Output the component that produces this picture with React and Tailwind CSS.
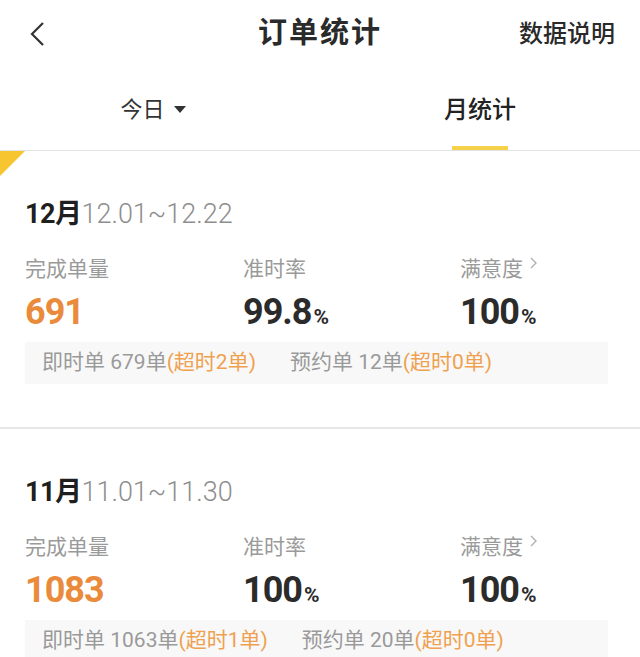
import React from "react";

const font = { fontFamily: '"Roboto", "Noto Sans CJK SC", sans-serif' };

function Stat({ label, value, unit, orange, arrow }) {
  return (
    <div className="flex flex-col">
      <div className="flex items-start h-[28px] text-[21px] leading-[28px] text-[#9a9a9a]">
        <span>{label}</span>
        {arrow && (
          <svg width="10" height="14" viewBox="0 0 10 14" className="ml-[6px] mt-[1px]">
            <polyline points="2,2 7,7 2,12" fill="none" stroke="#b0b0b0" strokeWidth="1.4" />
          </svg>
        )}
      </div>
      <div
        className={`mt-[9px] h-[40px] leading-[40px] font-bold text-[36px] tracking-[-1px] ${
          orange ? "text-[#ea8b3b]" : "text-[#2b2b2b]"
        }`}
      >
        {value}
        {unit && <span className="text-[21px] ml-[2px] tracking-normal">{unit}</span>}
      </div>
    </div>
  );
}

function Card({ month, range, total, ontime, sat, instant, instantOver, reserve, reserveOver, corner }) {
  return (
    <div className="relative bg-white pt-[47px] pb-[43px] border-b-[2px] border-[#e6e6e6]">
      {corner && (
        <div className="absolute left-0 top-0 w-0 h-0 border-t-[25px] border-t-[#f7c530] border-r-[25px] border-r-transparent" />
      )}
      <div className="pl-[25px] h-[32px] leading-[32px] text-[27px]">
        <span className="font-bold text-[#1f1f1f] tracking-[-0.5px]">{month}</span>
        <span className="text-[#8e8e8e] font-light">{range}</span>
      </div>
      <div className="pl-[25px] mt-[25px] grid grid-cols-[218px_217px_1fr]">
        <Stat label="完成单量" value={total} orange />
        <Stat label="准时率" value={ontime.v} unit={ontime.u} />
        <Stat label="满意度" value={sat.v} unit={sat.u} arrow />
      </div>
      <div className="ml-[25px] mr-[32px] mt-[10px] h-[42px] bg-[#f8f8f8] flex items-center pl-[17px] gap-[34px] text-[21px] text-[#9a9a9a]">
        <span>
          即时单 {instant}单<span className="text-[#efa150]">(超时{instantOver}单)</span>
        </span>
        <span>
          预约单 {reserve}单<span className="text-[#efa150]">(超时{reserveOver}单)</span>
        </span>
      </div>
    </div>
  );
}

export default function App() {
  return (
    <div className="w-[640px] h-[657px] overflow-hidden bg-white" style={font}>
      <div className="relative h-[68px] flex items-center justify-center">
        <svg width="20" height="28" viewBox="0 0 20 28" className="absolute left-[27px] top-[20px]">
          <polyline points="16,3 5,14 16,25" fill="none" stroke="#333" strokeWidth="2.2" />
        </svg>
        <span className="text-[29px] font-bold text-[#2a2a2a] tracking-[2px]">订单统计</span>
        <span className="absolute right-[25px] top-[18px] leading-[32px] text-[24px] font-medium text-[#2a2a2a]">
          数据说明
        </span>
      </div>
      <div className="flex h-[83px] border-b border-[#e2e2e2]">
        <div className="flex-1 flex flex-col items-center pt-[26px]">
          <div className="h-[32px] leading-[32px] text-[22px] text-[#333] flex items-center pr-[14px]">
            今日
            <svg width="12" height="8" viewBox="0 0 12 8" className="ml-[9px]">
              <polygon points="0,0 12,0 6,7" fill="#333" />
            </svg>
          </div>
        </div>
        <div className="flex-1 flex flex-col items-center pt-[26px]">
          <div className="h-[32px] leading-[32px] text-[24px] font-medium text-[#222]">月统计</div>
          <div className="mt-[20px] w-[56px] h-[4px] bg-[#f5d24a]" />
        </div>
      </div>
      <Card
        corner
        month="12月"
        range="12.01~12.22"
        total="691"
        ontime={{ v: "99.8", u: "%" }}
        sat={{ v: "100", u: "%" }}
        instant="679"
        instantOver="2"
        reserve="12"
        reserveOver="0"
      />
      <Card
        month="11月"
        range="11.01~11.30"
        total="1083"
        ontime={{ v: "100", u: "%" }}
        sat={{ v: "100", u: "%" }}
        instant="1063"
        instantOver="1"
        reserve="20"
        reserveOver="0"
      />
    </div>
  );
}
